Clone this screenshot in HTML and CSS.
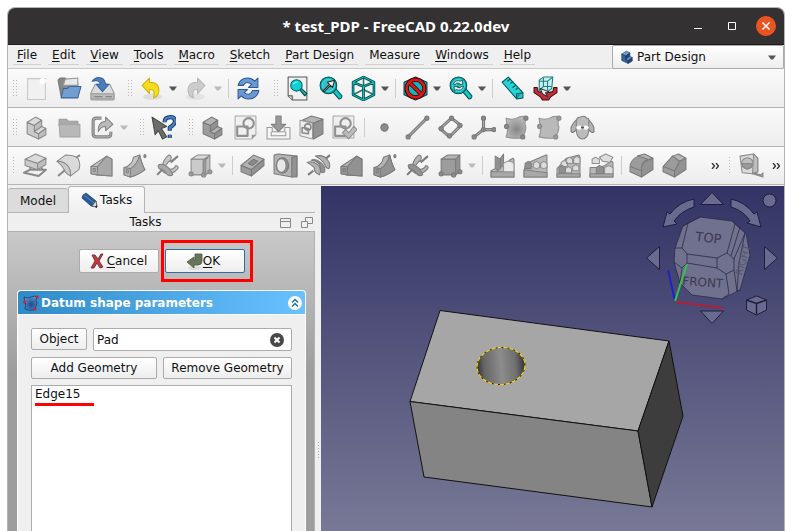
FILE: index.html
```html
<!DOCTYPE html>
<html lang="en">
<head>
<meta charset="utf-8">
<title>* test_PDP - FreeCAD 0.22.0dev</title>
<link rel="stylesheet" href="styles.css">
</head>
<body>
<svg class="defs" aria-hidden="true">
  <defs>
    <linearGradient id="hole" x1="0" x2="1" y1="0" y2="0">
      <stop offset="0" stop-color="#333"/><stop offset=".15" stop-color="#666"/><stop offset=".5" stop-color="#8c8c8c"/><stop offset=".8" stop-color="#707070"/><stop offset="1" stop-color="#333"/>
    </linearGradient>
    <radialGradient id="datum" cx=".55" cy=".6" r=".6">
      <stop offset="0" stop-color="#204a87"/><stop offset="1" stop-color="#5b8fce"/>
    </radialGradient>
    <radialGradient id="blob" cx=".5" cy=".6" r=".6">
      <stop offset="0" stop-color="#858585"/><stop offset="1" stop-color="#bdbdbd"/>
    </radialGradient>
  </defs>
  <symbol id="i-down" viewBox="0 0 8 5"><path d="M0 0.5h8L5 4.5H3z"/></symbol>
  <symbol id="i-lshape" viewBox="0 0 24 24">
    <path class="a" d="M3 7l7 3v6l4 2v5L3 18z"/><path class="b" d="M3 7l8-5 6 3-7 5z"/><path class="c" d="M10 10l7-5v6l-7 5z"/><path class="b" d="M10 16l7-5 4 2-7 5z"/><path class="c" d="M14 18l7-5v6l-7 4z"/>
  </symbol>
  <symbol id="i-loft" viewBox="0 0 24 24">
    <path class="b" d="M2 13L17 3l5 3v16l-14-1-6-1z"/><path class="c" d="M8 13L17 3l5 3v16L8 21z"/><path class="a" d="M2 13h6v8l-6-1z"/><path class="n" d="M4 15h2v3H4z"/>
  </symbol>
  <symbol id="i-sweep" viewBox="0 0 24 24">
    <path class="b" d="M2 14q8-2 9-10l6-2q2 9 5 14-6 5-14 7l-6-2z"/><path class="c" d="M8 15q6-3 9-13 2 9 5 14-6 5-14 7z"/><path class="a" d="M2 14l6 1v8l-6-2z"/><path class="n" d="M4 16h2v3H4z"/><ellipse class="d" cx="22" cy="3" rx="1" ry="1.500"/>
  </symbol>
  <symbol id="i-helix" viewBox="0 0 24 24">
    <path class="n w2" d="M2 21l7-7M15 9l7-6"/><path class="b" d="M7 13Q8 6 13 2q4 0 2 5-7 5-4 8 7 2 9-3 4 1 1 4-6 6-12 3-3-2-2-6z"/><path class="c" d="M4 15q-3-5 4-4 7 3 9 10-4 2-6-1-2-4-7-5z"/>
  </symbol>
  <symbol id="i-primbox" viewBox="0 0 24 24">
    <path class="b" d="M3 6l6-4h12l-4 4z"/><path class="a" d="M3 6h14v15H3z"/><path class="c" d="M17 6l4-4v16l-4 3z"/><circle class="d" cx="3" cy="20" r="2"/><circle class="d" cx="15" cy="21" r="2"/><circle class="d" cx="21" cy="18" r="2"/>
  </symbol>
  <symbol id="i-lens" viewBox="0 0 24 24">
    <path class="handle" d="M14 15l3-3 6 7q0 3-3 3z"/><circle class="glass" cx="10" cy="9" r="8"/><circle class="ring" cx="10" cy="9" r="6"/>
  </symbol>
  <symbol id="i-more" viewBox="0 0 8 6"><path d="M1 0l2.500 3L1 6M5 0l2.500 3L5 6" fill="none" stroke="#333" stroke-width="1.300"/></symbol>
</svg>

<div class="window">
  <header class="titlebar">
    <h1>* test_PDP - FreeCAD 0.22.0dev</h1>
    <div class="controls">
      <button aria-label="Minimize"><svg viewBox="0 0 20 20"><path d="M6 12.500h8"/></svg></button>
      <button aria-label="Maximize"><svg viewBox="0 0 20 20"><path d="M6.500 6.500h7v7h-7z"/></svg></button>
      <button class="close" aria-label="Close"><svg viewBox="0 0 20 20"><path d="M6.500 6.500l7 7M13.500 6.500l-7 7"/></svg></button>
    </div>
  </header>

  <div class="menubar">
    <nav>
      <a href="#"><u>F</u>ile</a><a href="#"><u>E</u>dit</a><a href="#"><u>V</u>iew</a><a href="#"><u>T</u>ools</a><a href="#"><u>M</u>acro</a><a href="#"><u>S</u>ketch</a><a href="#"><u>P</u>art Design</a><a href="#">Measure</a><a href="#"><u>W</u>indows</a><a href="#"><u>H</u>elp</a>
    </nav>
    <div class="workbench">
      <svg class="wb-icon blue" viewBox="0 0 24 24"><use href="#i-lshape"/></svg>
      <select aria-label="Workbench"><option>Part Design</option></select>
      <svg class="down"><use href="#i-down"/></svg>
    </div>
  </div>

  <div class="toolbar">
    <span class="grip"></span>
    <button aria-label="New"><svg viewBox="0 0 24 24"><path d="M3.500 2.500h17v20h-17z" fill="#f1f1f1" stroke="#c6c6c6"/><circle cx="18" cy="5" r="3" fill="#fff" stroke="none"/></svg></button>
    <button aria-label="Open"><svg viewBox="0 0 24 24"><path d="M1 4l2-2h5l1 2h9l2 3v13H4z" fill="#888" stroke="#777"/><path d="M6 9l2-6 12-1v7z" fill="#e8e8e8" stroke="#999"/><path d="M6 12h4l2-2h11l-3 11H4z" fill="#729fcf" stroke="#3465a4"/></svg></button>
    <button aria-label="Save"><svg viewBox="0 0 24 24"><path d="M5 8h14l4 8v6q0 1-1 1H2q-1 0-1-1v-6z" fill="#ddd" stroke="#999"/><path d="M1 17h22v5H1z" fill="#bbb" stroke="#999"/><path d="M4 20h8M15 20h6" stroke="#777"/><path d="M2 5q4-5 9-3 3 1 4 6h3l-6 7-6-7h4q-1-5-8-3z" fill="#4a7ebb" stroke="#3465a4"/></svg></button>
    <span class="grip gap"></span>
    <button class="menu" aria-label="Undo"><svg viewBox="0 0 24 24"><ellipse cx="13" cy="20" rx="9" ry="3" fill="#ddd"/><path d="M3 9l7-7v4q10 0 9 9-1 5-5 6 2-9-4-8v4z" fill="#f5dc1e" stroke="#d0b010"/></svg><svg class="down"><use href="#i-down"/></svg></button>
    <button class="menu off" aria-label="Redo"><svg viewBox="0 0 24 24"><ellipse cx="11" cy="20" rx="9" ry="3" fill="#e2e2e2"/><path d="M20 9l-7-7v4Q3 6 4 15q1 5 5 6-2-9 4-8v4z" fill="#ccc" stroke="#b8b8b8"/></svg><svg class="down"><use href="#i-down"/></svg></button>
    <span class="sep"></span>
    <button aria-label="Refresh"><svg viewBox="0 0 24 24"><path d="M2 9q2-7 9-7 4 0 7 3l3-3v9h-9l3-3q-5-4-8 1zM22 14q-2 8-10 8-4 0-7-3l-3 3v-9h9l-3 3q5 4 8-2z" fill="#6b98d1" stroke="#2c5896"/></svg></button>
    <span class="grip gap"></span>
    <button aria-label="Fit all"><svg viewBox="0 0 24 24"><path d="M3 1h18v22H7l-4-4z" fill="#f0f0f0" stroke="#555"/><path d="M3 19h4v4" fill="#ccc" stroke="#555"/><path d="M14 13l2-1 5 5-2 2z" fill="#16b3b8" stroke="#044"/><circle cx="11" cy="9" r="5.500" fill="#16cdd0" stroke="#066"/><path d="M8 8q2-3 4-2" stroke="#8ff" fill="none"/></svg></button>
    <button aria-label="Fit selection"><svg class="teal" viewBox="0 0 24 24"><use href="#i-lens"/><path d="M5 14l6-6-2-2 7-2-2 7-2-2-6 6z" fill="#eee" stroke="#222"/></svg></button>
    <button class="menu" aria-label="Isometric"><svg viewBox="0 0 24 24"><path d="M2 6l10-5 10 5v12l-10 5-10-5z" fill="#f4f4f4"/><path d="M12 2v12M2 18l10-5 10 5" fill="none" stroke="#2a7478" stroke-width="1.500"/><path d="M2 6l10-5 10 5v12l-10 5-10-5zM2 6l10 4 10-4M12 10v13" fill="none" stroke="#044" stroke-width="2.500"/><path d="M2 6l10-5 10 5v12l-10 5-10-5zM2 6l10 4 10-4M12 10v13" fill="none" stroke="#1bb" stroke-width="1"/></svg><svg class="down"><use href="#i-down"/></svg></button>
    <span class="sep"></span>
    <button class="menu" aria-label="Draw style"><svg viewBox="0 0 24 24"><path d="M1 6l11-5 11 5v12l-11 5-11-5z" fill="#16b3b8" stroke="#044"/><circle cx="12" cy="12" r="8.500" fill="none" stroke="#300" stroke-width="4"/><path d="M6 6l12 12" stroke="#300" stroke-width="4"/><circle cx="12" cy="12" r="8.500" fill="none" stroke="#d81818" stroke-width="2.500"/><path d="M6 6l12 12" stroke="#d81818" stroke-width="2.500"/></svg><svg class="down"><use href="#i-down"/></svg></button>
    <button class="menu" aria-label="Zoom"><svg class="teal" viewBox="0 0 24 24"><use href="#i-lens"/><path d="M5 8q2-5 7-3l2-1v4h-4l1-1q-3-1-4 1zM15 10q-2 5-7 3l-2 1v-4h4l-1 1q3 1 4-1z" fill="#eee" stroke="#055" stroke-width=".8"/></svg><svg class="down"><use href="#i-down"/></svg></button>
    <span class="sep"></span>
    <button aria-label="Measure"><svg viewBox="0 0 24 24"><path d="M2 6l6-5 14 15v5l-6 1z" fill="#26d3d6" stroke="#055"/><path d="M16 22v-5l6-1" fill="#16a5a8" stroke="#055"/><path d="M10 3l-3 2M12 6l-2 1M15 9l-3 2M17 12l-2 1" stroke="#044"/></svg></button>
    <button class="menu" aria-label="Inspect"><svg viewBox="0 0 24 24"><path d="M1 11h3l1 4 5 1v-3l2 1 2-1v3l5-1 1-4h3v5l-6 4-2 3H9l-2-3-6-4z" fill="#c92a36" stroke="#311"/><path d="M6 4l4-3h9l-1 11-4 3H6z" fill="#c4f0f0" stroke="#187c80"/><path d="M6 5h8v9M14 5l5-4M10 2v8l-4 4M10 10h8" fill="none" stroke="#187c80"/><path d="M7 12l8 3-3 1 2 4-5-3z" fill="#eee" stroke="#333"/></svg><svg class="down"><use href="#i-down"/></svg></button>
  </div>

  <div class="toolbar">
    <span class="grip"></span>
    <button aria-label="Create part"><svg class="light" viewBox="0 0 24 24"><use href="#i-lshape"/></svg></button>
    <button aria-label="Create group"><svg viewBox="0 0 24 24"><path d="M2 4h7l2 2h9v4H2z" fill="#aaa" stroke="#999"/><path d="M2 9h20v12H3z" fill="#b8b8b8" stroke="#a5a5a5"/></svg></button>
    <button class="menu off" aria-label="Link"><svg viewBox="0 0 24 24"><path d="M11 3H6Q3 3 3 6v12q0 3 3 3h11q3 0 3-3v-2" fill="none" stroke="#808080" stroke-width="3"/><path d="M11 3H6Q3 3 3 6v12q0 3 3 3h11q3 0 3-3v-2" fill="none" stroke="#b0b0b0" stroke-width="1"/><path d="M8 16q-1-9 7-10V2l7 7-7 6v-4q-5 0-7 5z" fill="#bbb" stroke="#808080"/></svg><svg class="down"><use href="#i-down"/></svg></button>
    <span class="grip gap"></span>
    <button aria-label="What's this?"><svg viewBox="0 0 24 24"><path d="M13 7q0-5 6-5 4 0 4 4 0 3-5 6v3M18 19v3" fill="none" stroke="#173b6c" stroke-width="4"/><path d="M13 7q0-5 6-5 4 0 4 4 0 3-5 6v3M18 19v3" fill="none" stroke="#4a80c4" stroke-width="2"/><path d="M1 2l14 9-5 2 5 8-4 2-4-8-3 4z" fill="#6c6f69" stroke="#454743"/></svg></button>
    <span class="grip gap"></span>
    <button aria-label="Create body"><svg class="dark" viewBox="0 0 24 24"><use href="#i-lshape"/></svg></button>
    <button aria-label="Create sketch"><svg viewBox="0 0 24 24"><path d="M2 1h20v18l-4 4H2z" fill="#f0f0f0" stroke="#aaa"/><path d="M18 23v-4h4z" fill="#999"/><path d="M4 11h10v9H4z" fill="none" stroke="#909090" stroke-width="2"/><circle cx="15" cy="8" r="5" fill="none" stroke="#909090" stroke-width="2"/></svg></button>
    <button aria-label="Attach sketch"><svg viewBox="0 0 24 24"><path d="M1 12h5v4h12v-4h5v11H1z" fill="#f5f5f5" stroke="#999"/><path d="M5 16v4h14v-4" fill="none" stroke="#999"/><path d="M9.500 1h5v8H19l-7 7-7-7h4.500z" fill="#999" stroke="#808080"/></svg></button>
    <button aria-label="Map sketch"><svg class="dark" viewBox="0 0 24 24"><path class="b" d="M3 5l9-4 11 3-9 4z"/><path class="c" d="M14 8l9-4v14l-9 5z"/><path d="M1 5l12 3v15L1 20z" fill="#eee" stroke="#999"/><path d="M3 12l6 1v5l-6-1z" fill="none" stroke="#888" stroke-width="1.500"/><circle cx="8.500" cy="11.500" r="3" fill="none" stroke="#888" stroke-width="1.500"/></svg></button>
    <button aria-label="Validate sketch"><svg viewBox="0 0 24 24"><path d="M1 1h20v21H1z" fill="#eee" stroke="#aaa"/><path d="M3 11h10v9H3z" fill="none" stroke="#909090" stroke-width="2"/><circle cx="13" cy="8" r="5" fill="none" stroke="#909090" stroke-width="2"/><path d="M10 17l3-3 3 3 5-6 3 3-8 9z" fill="#bbb" stroke="#909090"/></svg></button>
    <span class="sep"></span>
    <button aria-label="Datum point"><svg viewBox="0 0 24 24"><circle cx="12" cy="12" r="3.500" fill="#8c8c8c" stroke="#777"/></svg></button>
    <button aria-label="Datum line"><svg class="dark" viewBox="0 0 24 24"><path class="n w3" d="M3 21L21 3"/><path d="M3 21L21 3" stroke="#aaa"/><circle class="d" cx="3" cy="21" r="2"/><circle class="d" cx="21" cy="3" r="2"/></svg></button>
    <button aria-label="Datum plane"><svg class="dark" viewBox="0 0 24 24"><path class="n w3" d="M2 13l11-10 9 7-11 11z"/><path d="M2 13l11-10 9 7-11 11z" stroke="#aaa" fill="none"/><circle class="d" cx="3" cy="13" r="2"/><circle class="d" cx="13" cy="3" r="2"/><circle class="d" cx="21" cy="10" r="2"/><circle class="d" cx="11" cy="20" r="2"/></svg></button>
    <button aria-label="Coordinate system"><svg class="dark" viewBox="0 0 24 24"><path class="n w3" d="M12 3v11h10M12 14l-9 7"/><path d="M12 3v11h10M12 14l-9 7" stroke="#aaa" fill="none"/><circle class="d" cx="12" cy="3" r="2"/><circle class="d" cx="22" cy="14" r="2"/><circle class="d" cx="3" cy="21" r="2"/><circle class="d" cx="12" cy="14" r="2"/></svg></button>
    <button aria-label="Shape binder"><svg class="dark" viewBox="0 0 24 24"><path d="M2 3q5 2 10 0 5-3 10-1-3 6-1 9 0 6-4 11-8 1-15-1 2-5 1-10z" fill="url(#blob)" stroke="#909090"/><circle class="d" cx="21" cy="3" r="2"/><circle class="d" cx="2.500" cy="11" r="2"/><circle class="d" cx="18" cy="21" r="2"/></svg></button>
    <button aria-label="Sub-shape binder"><svg class="light" viewBox="0 0 24 24"><path d="M2 3q5 2 10 0 5-3 10-1-3 6-1 9 0 6-4 11-8 1-15-1 2-5 1-10z" fill="#b9b9b9" stroke="#909090"/><circle class="d" cx="21" cy="3" r="2"/><circle class="d" cx="2.500" cy="11" r="2"/><circle class="d" cx="18" cy="21" r="2"/></svg></button>
    <button aria-label="Clone"><svg viewBox="0 0 24 24"><path d="M7 5Q5 4 1 12v4q2 2 5-2zM17 5q2-1 6 7v4q-2 2-5-2z" fill="#b4b4b4" stroke="#777"/><path d="M6 5q1-3 4-3 4-2 6 1 3 0 2 4v8q-1 8-6 8t-6-8z" fill="#bbb" stroke="#808080"/><ellipse cx="9" cy="12" rx="3" ry="2" fill="#fff"/><ellipse cx="15" cy="12" rx="3" ry="2" fill="#fff"/><path d="M10.500 12h3" stroke="#555" stroke-width="2"/></svg></button>
  </div>

  <div class="toolbar last">
    <span class="grip"></span>
    <button aria-label="Pad"><svg class="light" viewBox="0 0 24 24"><path class="n w2" d="M1 19l6-3h15l-7 6zM7 13v3M18 14v3"/><path class="b" d="M2 6l10-5 10 4-8 5z"/><path class="a" d="M2 6l12 4v6L2 12z"/><path class="c" d="M14 10l8-5v6l-8 5z"/></svg></button>
    <button aria-label="Revolution"><svg class="light" viewBox="0 0 24 24"><path class="n w2" d="M2 22l7-6M17 6l6-4"/><path class="b" d="M1 8l8-6q8 0 12 3 3 5 1 11l-8 6q0-7-3-10-4-4-10-4z"/><path class="a" d="M1 8q6 0 10 4 3 3 3 10-5-2-6-6-2-4-7-8z"/></svg></button>
    <button aria-label="Additive loft"><svg class="mid" viewBox="0 0 24 24"><use href="#i-loft"/></svg></button>
    <button aria-label="Additive pipe"><svg class="mid" viewBox="0 0 24 24"><use href="#i-sweep"/></svg></button>
    <button aria-label="Additive helix"><svg class="mid" viewBox="0 0 24 24"><use href="#i-helix"/></svg></button>
    <button class="menu off" aria-label="Additive primitive"><svg class="light" viewBox="0 0 24 24"><use href="#i-primbox"/><path class="n w2" d="M15 7v13M15 7l4-3"/></svg><svg class="down"><use href="#i-down"/></svg></button>
    <span class="sep"></span>
    <button aria-label="Pocket"><svg class="dark" viewBox="0 0 24 24"><path class="b" d="M1 12L13 2l10 4-12 10z"/><path class="a" d="M1 12l10 4v6L1 18z"/><path class="c" d="M11 16L23 6v6L11 22z"/><path class="d" d="M8 10l5-4 4 2-5 4z"/></svg></button>
    <button aria-label="Hole"><svg class="dark" viewBox="0 0 24 24"><path class="b" d="M1 2l4-1 18 2v19l-5 1-17-3z"/><path class="c" d="M18 4l5-1v20h-5z"/><ellipse class="d" cx="9" cy="12" rx="6" ry="7.500"/><ellipse cx="8" cy="12" rx="4" ry="6" fill="#e8e8e8"/></svg></button>
    <button aria-label="Groove"><svg class="dark" viewBox="0 0 24 24"><path class="n w2" d="M2 21l5-4M17 7l6-5"/><path class="b" d="M1 9q6-2 11 3 3 4 1 9-6-3-5-7-3-3-7-5z"/><path class="c" d="M5 7q4-2 9 2 5 4 4 9-2 2-4 0 1-10-9-11z"/><path class="b" d="M9 3q8-2 12 4 3 4 1 8-3 0-4-4-3-5-9-8z"/></svg></button>
    <button aria-label="Subtractive loft"><svg class="dark" viewBox="0 0 24 24"><use href="#i-loft"/></svg></button>
    <button aria-label="Subtractive pipe"><svg class="dark" viewBox="0 0 24 24"><use href="#i-sweep"/></svg></button>
    <button aria-label="Subtractive helix"><svg class="dark" viewBox="0 0 24 24"><use href="#i-helix"/></svg></button>
    <button class="menu off" aria-label="Subtractive primitive"><svg class="dark" viewBox="0 0 24 24"><use href="#i-primbox"/></svg><svg class="down"><use href="#i-down"/></svg></button>
    <span class="sep"></span>
    <button aria-label="Mirrored"><svg class="mid" viewBox="0 0 24 24"><path class="a" d="M1 17l8-4 13-8 1 1v17H1z"/><path class="c" d="M1 18h22v5H1z"/><path class="d" d="M5 3l5 3v9l-3 2-2-3zM10 5l3-4v11l-3 2z"/><path d="M13 10q5-4 10 0v8H13z" fill="#eaeaea" stroke="#999"/></svg></button>
    <button aria-label="Linear pattern"><svg class="mid" viewBox="0 0 24 24"><path class="a" d="M1 17l2-7 19-8h1v21H1z"/><path class="c" d="M1 16l22 3v4H1z"/><path class="d" d="M2 10l3-2 3 2v5H2z"/><path d="M10 10l3-2 3 2v4l-3 1-3-1zM17 10l3-2 3 2v4l-3 1-3-1z" fill="#ddd" stroke="#909090"/></svg></button>
    <button aria-label="Polar pattern"><svg class="mid" viewBox="0 0 24 24"><path class="a" d="M1 15l9-10 12-3 1 2v19H1z"/><path class="c" d="M1 20h22v3H1z"/><path d="M10 6l3-2 3 2v4h-6zM17 5l3-2 3 2v5h-6zM5 9l3-2 3 2v4H5zM9 15l3-2 3 2v4H9zM16 13l3-2 3 2v4h-6z" fill="#ddd" stroke="#909090"/><path class="d" d="M3 14l3-2 3 2v5H3z"/></svg></button>
    <button aria-label="MultiTransform"><svg class="mid" viewBox="0 0 24 24"><path class="a" d="M1 14h10l11-6 1 1v14H1z"/><path class="c" d="M1 20h22v3H1z"/><path d="M10 4l6-3 7 3-3 5-7-1zM3 6l3-2 4 2v4H3zM15 14l4-2 4 2v6h-8z" fill="#ddd" stroke="#909090"/><path class="d" d="M7 14l3-2 4 2v6H7z"/></svg></button>
    <span class="sep"></span>
    <button aria-label="Fillet"><svg class="dark" viewBox="0 0 24 24"><path class="b" d="M8 3l7-2 8 4-8 3z"/><path class="c" d="M12 13q1-5 11-8v11l-11 7z"/><path class="a" d="M1 14Q1 6 9 3l9 3q-6 3-6 8v9L1 18z"/><path class="n" d="M1 13l11 4"/></svg></button>
    <button aria-label="Chamfer"><svg class="dark" viewBox="0 0 24 24"><path class="b" d="M10 3l6-2 7 4-6 3z"/><path class="c" d="M12 17l5-9 6-3v11l-11 7z"/><path class="a" d="M1 13l9-10 7 5-5 9v6L1 18z"/><path class="n" d="M1 13l11 4"/></svg></button>
    <button class="more" aria-label="More modeling tools"><svg><use href="#i-more"/></svg></button>
    <span class="grip"></span>
    <button aria-label="Measure distance"><svg class="light" viewBox="0 0 24 24"><path class="b" d="M1 3l13-2 4 4v13l-5 2L3 19z"/><path class="c" d="M14 1l4 4v13l-5 2z"/><circle class="c" cx="8" cy="10" r="5.500"/><path class="d" d="M3 10h10q-1 5-5 5t-5-5zM13 19l8 2 2-2v4l-10-3z"/></svg></button>
    <button class="more small" aria-label="More measure tools"><svg><use href="#i-more"/></svg></button>
  </div>

  <main>
    <aside>
      <div class="tabs" role="tablist">
        <button class="tab" role="tab">Model</button>
        <button class="tab active" role="tab" aria-selected="true"><svg viewBox="0 0 18 18"><path d="M2 4l3-2 10 8 1 6-6-1L1 7z" fill="#285a94" stroke="#173b66" stroke-width=".7"/><path d="M3 4l10 8" stroke="#5b8bc4"/><path d="M11 15l4-5 1 6z" fill="#e4e0d8" stroke="#555" stroke-width=".7"/><path d="M14 16l2-2v3z" fill="#222"/></svg>Tasks</button>
      </div>
      <div class="docktitle">
        <span>Tasks</span>
        <div class="dockbtns">
          <button aria-label="Overlay"><svg viewBox="0 0 12 12"><path d="M.5 1.500h10v9H.5zM.5 4.500h10"/></svg></button>
          <button aria-label="Float"><svg viewBox="0 0 12 12"><path d="M4.500 .5h7v6h-7z"/><path d="M.5 4.500h6v6h-6z" fill="#efefef"/></svg></button>
        </div>
      </div>
      <section class="taskpanel">
        <div class="dialogbtns">
          <button class="btn"><svg viewBox="0 0 14 16"><path d="M2 2h3l3 4 3-5h2L9 8l4 6-3 1-3-5-3 5H1l4-7z" fill="#c23b45" stroke="#6a1c24" stroke-width=".8"/></svg><span><u>C</u>ancel</span></button>
          <div class="highlight"><button class="btn ok"><svg viewBox="0 0 17 17"><ellipse cx="9" cy="15" rx="7" ry="2" fill="#ddd"/><path d="M9 1h7v7q0 4-4 4H8v3L1 9l7-5v3h1z" fill="#66765a" stroke="#4a5642" stroke-width=".8"/></svg><span><u>O</u>K</span></button></div>
        </div>
        <div class="group">
          <header>
            <svg class="datum" viewBox="0 0 16 16"><path d="M1 2q3 2 7 0 4-2 6 0-2 4 0 6-1 4-3 7-5 1-9-1 1-4 0-6z" fill="url(#datum)" stroke="#1c4a80"/><circle cx="14" cy="2" r="1.500" fill="#e01b24"/><circle cx="1.500" cy="7" r="1.500" fill="#e01b24"/><circle cx="12" cy="14" r="1.500" fill="#e01b24"/></svg>
            <h2>Datum shape parameters</h2>
            <button aria-label="Collapse"><svg viewBox="0 0 14 14"><circle cx="7" cy="7" r="7" fill="#fff"/><path d="M4 6.500l3-3 3 3M4 10.500l3-3 3 3" fill="none" stroke="#1f6fae" stroke-width="1.500"/></svg></button>
          </header>
          <div class="form">
            <div class="row">
              <button class="btn object">Object</button>
              <div class="field"><input type="text" value="Pad" aria-label="Object"><button aria-label="Clear"><svg viewBox="0 0 14 14"><circle cx="7" cy="7" r="7" fill="#484848"/><path d="M4.500 4.500l5 5M9.500 4.500l-5 5" stroke="#fff" stroke-width="2"/></svg></button></div>
            </div>
            <div class="row">
              <button class="btn add">Add Geometry</button><button class="btn remove">Remove Geometry</button>
            </div>
            <ul class="list"><li>Edge15</li></ul>
          </div>
        </div>
      </section>
    </aside>
    <div class="splitter"><span></span></div>
    <div class="view">
      <svg class="model" viewBox="321 186 463 345" role="img" aria-label="Pad with a hole">
        <g stroke="#111" stroke-linejoin="round">
          <path d="M440 310.500L669 341 638 431 410 401.500z" fill="#a6a6a6"/>
          <path d="M410 401.500l228 29.500 14 76-228-30z" fill="#848484"/>
          <path d="M669 341l14 75-31 91-14-76z" fill="#3d3d3d"/>
        </g>
        <ellipse cx="501" cy="366" rx="24" ry="18.500" transform="rotate(-5 501 366)" fill="url(#hole)" stroke="#ffd500"/>
        <ellipse cx="501" cy="366" rx="24" ry="18.500" transform="rotate(-5 501 366)" fill="none" stroke="#222" stroke-dasharray="2 4"/>
      </svg>
      <svg class="navcube" viewBox="640 186 144 145" role="img" aria-label="Navigation cube">
        <g fill="#6a6a90" stroke="#1e1e38">
          <path d="M712 192.500l11.500 12h-23zM712 323.500l11.500-12.500h-23zM646.500 258l13-11.500v23zM777.500 258l-13-11.500v23z"/>
          <circle cx="769.500" cy="200.500" r="6.500"/>
          <path d="M694 199v8q-13 4-20 14l3 3-14 3 4-15 3 2q9-12 24-15zM731 199v8q13 4 19 14l-3 2 14 4-4-15-3 2q-9-12-23-15z"/>
          <path d="M746.500 300l10-4 10 4v10l-10 5-10-5z"/><path d="M746.500 300l10 3.500 10-3.500M756.500 303.500v11" fill="none" stroke-width="1.500"/>
        </g>
        <g fill="#70708f" stroke="#2b2b42" stroke-width=".8">
          <path d="M700 217l32 4 14 12 4 22-10 35-18 9-30-4-12-12-6-21 1-14 8-22z"/>
          <path d="M675 248h7l5 6v9l-5 5-8-6M682 248l6-25 12-6M688 223l-5 3M687 254l30 4v10l-30-5M717 258l10-5 7 6v11l-8 4-9-6M727 253l8-29-3-3M735 224l10 9-11 26M740 227l-9 29M726 274l3 20-7 5M734 270l3 21 3-1M682 268l-2 15M745 233l-6 30-2 28" fill="none"/>
        </g>
        <g class="cubetext"><text x="695" y="241" transform="rotate(6 695 241)">TOP</text><text class="front" x="682" y="285" transform="rotate(4 682 285)">FRONT</text><text class="side" x="742" y="276" transform="rotate(-74 742 276)">RIGHT</text></g>
        <g fill="none" stroke-width="2"><path d="M675 301l-7-31" stroke="#2121c4"/><path d="M675 301l12-37" stroke="#35c24a"/><path d="M676 302l47 6" stroke="#b02038"/></g>
      </svg>
    </div>
  </main>
</div>
</body>
</html>
```
FILE: styles.css
```css
* { box-sizing: border-box; }
body {
  margin: 0;
  padding: 7px 8px 0 7px;
  height: 100vh;
  overflow: hidden;
  background: #fff;
  font: 12px/16px "DejaVu Sans", sans-serif;
  color: #111;
}
button, input, select { font: inherit; color: inherit; margin: 0; }
button { border: 0; padding: 0; background: none; }
svg { display: block; flex: none; }
.defs { position: absolute; width: 0; height: 0; }

.window {
  height: 100%;
  display: flex;
  flex-direction: column;
  background: #efefef;
  border: 1px solid #b4b4b4;
  border-bottom: 0;
  border-radius: 8px 8px 0 0;
  overflow: hidden;
}

/* title bar */
.titlebar {
  position: relative;
  flex: none;
  height: 37px;
  display: flex;
  align-items: center;
  justify-content: center;
  background: #333132;
  border-bottom: 1px solid #1c1b1b;
  color: #fff;
}
.titlebar h1 { margin: 0; font: bold 15px/20px "Noto Sans", sans-serif; }
.controls { position: absolute; right: 8px; display: flex; gap: 14px; }
.controls svg { width: 20px; height: 20px; fill: none; stroke: #fff; }
.close { border-radius: 50%; background: #e95420; }
.close svg { stroke-width: 1.500; }

/* menu bar */
.menubar {
  flex: none;
  display: flex;
  justify-content: space-between;
  height: 24px;
  border-bottom: 1px solid #c8c8c8;
}
nav { display: flex; gap: 7px; padding: 0 5px; align-items: flex-start; }
nav a { padding: 2px 4px 1px; border-bottom: 1px solid #d2d2d2; color: inherit; text-decoration: none; }
u { text-underline-offset: 2px; }
.workbench {
  width: 172px;
  height: 24px;
  display: flex;
  align-items: center;
  padding: 0 7px;
  border: 1px solid #aaa;
  border-radius: 2px;
  background: linear-gradient(#fff, #eee);
}
.wb-icon { width: 14px; height: 14px; }
.workbench select { flex: 1; min-width: 0; appearance: none; border: 0; background: none; padding: 0 3px; }
.down { width: 8px; height: 5px; fill: #555; }
.off .down { fill: #bbb; }

/* toolbars */
.toolbar {
  flex: none;
  height: 39px;
  display: flex;
  align-items: center;
  border-bottom: 1px solid #b4b4b4;
  background: linear-gradient(#fafafa, #ededed);
}
.toolbar.last { height: 38px; }
.toolbar button { display: flex; align-items: center; width: 33px; padding: 0 4px; }
.toolbar button > svg:first-child { width: 25px; height: 25px; stroke-linejoin: round; }
.toolbar .menu { width: 45px; gap: 5px; padding-right: 3px; }
.grip {
  width: 4px;
  height: 17px;
  margin: 0 3px 0 5px;
  background: repeating-linear-gradient(90deg, #bbb 0 1px, transparent 1px 3px);
  mask: repeating-linear-gradient(#000 0 1px, transparent 1px 3px);
}
.grip.gap { margin-left: 9px; }
.sep { width: 1px; height: 19px; margin: 0 3px; background: #ccc; }
.toolbar .more { width: 24px; margin-left: 12px; padding: 0 8px; }
.toolbar .more + .grip { margin-left: 2px; }
.toolbar .more > svg:first-child { width: 8px; height: 6px; }
.toolbar .small { margin: 0 0 0 auto; padding: 0 4px; width: 17px; }

.light { --a: #cacaca; --b: #dadada; --c: #bebebe; --d: #9a9a9a; --s: #8a8a8a; }
.mid { --a: #b8b8b8; --b: #c6c6c6; --c: #a8a8a8; --d: #909090; --s: #808080; }
.dark { --a: #9c9c9c; --b: #b4b4b4; --c: #929292; --d: #8a8a8a; --s: #7a7a7a; }
.blue { --a: #3465a4; --b: #729fcf; --c: #204a87; --d: #204a87; --s: #10294b; }
.teal { --s: #055; }
.a { fill: var(--a); stroke: var(--s); }
.b { fill: var(--b); stroke: var(--s); }
.c { fill: var(--c); stroke: var(--s); }
.d { fill: var(--d); stroke: var(--s); }
.n { fill: none; stroke: var(--s); }
.w2 { stroke-width: 2; }
.w3 { stroke-width: 3; }
.handle { fill: #16c5c8; stroke: #055; }
.glass { fill: #17a3a8; stroke: #055; }
.ring { fill: #3bbfc2; stroke: #2bdcdc; }

/* dock */
main { flex: 1; min-height: 0; display: flex; padding-top: 1px; }
aside { width: 307px; flex: none; display: flex; flex-direction: column; }
.tabs { display: flex; align-items: flex-end; height: 27px; border-bottom: 1px solid #b4b4b4; }
.tab {
  height: 24px;
  padding: 0 12px;
  border: 1px solid #b4b4b4;
  border-width: 1px 0 0;
  border-radius: 3px 3px 0 0;
  background: #dcdcdc;
}
.tab.active {
  display: flex;
  align-items: center;
  gap: 1px;
  height: 27px;
  margin-bottom: -1px;
  border-width: 1px 1px 0;
  background: linear-gradient(#fafafa, #efefef);
}
.tab svg { width: 18px; height: 18px; }
.docktitle { position: relative; height: 18px; line-height: 18px; text-align: center; padding-right: 32px; }
.dockbtns { position: absolute; right: 2px; top: 4px; display: flex; gap: 9px; }
.dockbtns svg { width: 12px; height: 12px; fill: none; stroke: #888; }

.taskpanel {
  flex: 1;
  min-height: 0;
  display: flex;
  flex-direction: column;
  padding: 17px 8px 0 9px;
  border: 1px solid #b0b0b0;
  border-width: 1px 1px 0 0;
  background: linear-gradient(#c9c9c9, #9d9d9d 140px);
}
.dialogbtns { display: flex; justify-content: center; gap: 6px; }
.btn {
  display: flex;
  align-items: center;
  justify-content: center;
  gap: 3px;
  height: 22px;
  border: 1px solid #acacac;
  border-radius: 2px;
  background: linear-gradient(#fff, #ededed);
}
.dialogbtns .btn { width: 80px; height: 24px; }
.dialogbtns svg { width: 14px; height: 16px; }
.dialogbtns .ok { border-color: #2f6f9f; gap: 0; padding-right: 3px; }
.dialogbtns .ok svg { width: 17px; height: 17px; }
.highlight { position: relative; }
.highlight::after { content: ""; position: absolute; inset: -9px -8px -9px -4px; border: 3px solid #f00; }

.group {
  flex: 1;
  min-height: 0;
  margin-top: 17px;
  display: flex;
  flex-direction: column;
  border: 1px solid #fff;
  border-bottom: 0;
  border-radius: 4px 4px 0 0;
  background: #efefef;
  overflow: hidden;
}
.group header {
  flex: none;
  display: flex;
  align-items: center;
  height: 24px;
  padding: 0 3px 0 5px;
  border-bottom: 1px solid #fff;
  background: linear-gradient(90deg, #2f8bc8, #68c2ff);
  color: #fff;
}
.group h2 { flex: 1; margin: 0 0 0 2px; font: bold 12px/16px "DejaVu Sans", sans-serif; }
.datum { width: 16px; height: 16px; }
.group header button svg, .field svg { width: 14px; height: 14px; }
.form { flex: 1; min-height: 0; display: flex; flex-direction: column; gap: 6px; padding: 13px 13px 0; }
.row { display: flex; gap: 6px; }
.object { width: 56px; }
.field {
  flex: 1;
  display: flex;
  align-items: center;
  height: 23px;
  padding: 0 7px 0 2px;
  border: 1px solid #acacac;
  border-radius: 2px;
  background: #fff;
}
.field input { flex: 1; min-width: 0; border: 0; padding: 0 1px; background: none; outline: 0; }
.add { flex: 126; }
.remove { flex: 129; }
.list { flex: 1; margin: 0; padding: 0 3px; list-style: none; border: 1px solid #acacac; border-bottom: 0; background: #fff; }
.list li { width: 59px; height: 20px; border-bottom: 3px solid #f00; }

.splitter { width: 6px; flex: none; display: flex; align-items: center; justify-content: center; padding-top: 184px; }
.splitter span { width: 1px; height: 17px; background: repeating-linear-gradient(#aaa 0 1px, transparent 1px 3px); }

/* 3D view */
.view { position: relative; flex: 1; min-width: 0; background: linear-gradient(#333366, #787896); }
.model { width: 100%; height: 100%; }
.navcube { position: absolute; top: 0; right: 0; width: 144px; height: 145px; }
.cubetext { font: 13px "DejaVu Sans", sans-serif; fill: #3a3a50; }
.front { font-size: 12px; }
.side { font-size: 10px; fill: #55556c; }
```
